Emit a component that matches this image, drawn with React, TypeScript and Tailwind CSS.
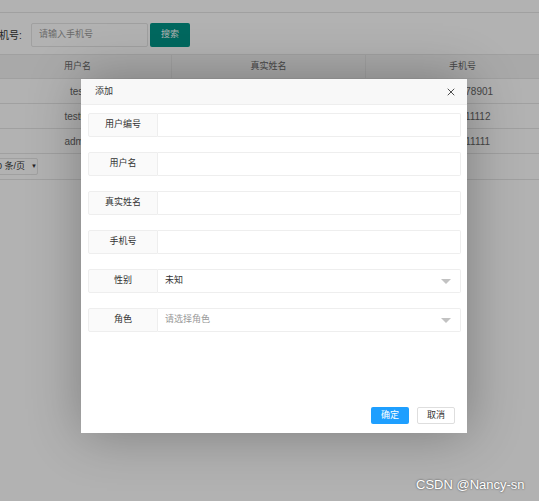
import { X } from "lucide-react";

const rows = [
  { name: "test", real: "测试", phone: "12345678901" },
  { name: "test01", real: "测试01", phone: "13111111112" },
  { name: "admin", real: "管理员", phone: "13111111111" },
];

const fields = [
  { label: "用户编号", value: "", select: false },
  { label: "用户名", value: "", select: false },
  { label: "真实姓名", value: "", select: false },
  { label: "手机号", value: "", select: false },
  { label: "性别", value: "未知", select: true },
  { label: "角色", value: "请选择角色", select: true, placeholder: true },
];

function FormRow({ label, value, select, placeholder }: { label: string; value: string; select: boolean; placeholder?: boolean }) {
  return (
    <div className="flex h-[24px]">
      <div className="w-[70px] shrink-0 flex items-center justify-center bg-[#fafafa] border border-[#eeeeee] rounded-l-[2px] text-[9px] text-[#333]">
        {label}
      </div>
      <div className="flex-1 flex items-center justify-between border border-l-0 border-[#eeeeee] rounded-r-[2px] bg-white pl-[7px] pr-[9px]">
        <span className={placeholder ? "text-[9px] text-[#999]" : "text-[9px] text-[#333]"}>{value}</span>
        {select && (
          <span className="w-0 h-0 border-l-[5px] border-r-[5px] border-t-[5px] border-l-transparent border-r-transparent border-t-[#c2c2c2]" />
        )}
      </div>
    </div>
  );
}

export default function App() {
  return (
    <div
      className="relative w-[539px] h-[501px] overflow-hidden bg-white"
      style={{ fontFamily: '"Liberation Sans", "Noto Sans CJK SC", sans-serif' }}
    >
      {/* page underneath, scrolled a little to the right */}
      <div className="h-[13px] border-b border-[#e6e6e6]" />
      <div className="flex items-center h-[24px] mt-[10px] -ml-[11px]">
        <span className="text-[10px] text-[#333] w-[42px] whitespace-nowrap">手机号:</span>
        <div className="w-[117px] h-[24px] border border-[#e6e6e6] rounded-[2px] flex items-center pl-[7px] text-[9px] text-[#999]">
          请输入手机号
        </div>
        <button className="ml-[2px] w-[40px] h-[24px] bg-[#009688] text-white text-[9px] rounded-[2px]">搜索</button>
      </div>
      <div className="mt-[7px] -ml-[16px] w-[590px] text-[10px] text-[#666]">
        <div className="flex h-[25px] bg-[#f2f2f2] border-y border-[#e6e6e6]">
          <div className="w-[188px] flex items-center justify-center border-r border-[#e6e6e6] text-[9px]">用户名</div>
          <div className="w-[194px] flex items-center justify-center border-r border-[#e6e6e6] text-[9px]">真实姓名</div>
          <div className="w-[193px] flex items-center justify-center text-[9px]">手机号</div>
        </div>
        {rows.map((r) => (
          <div key={r.phone} className="flex h-[25px] border-b border-[#e6e6e6]">
            <div className="w-[188px] flex items-center justify-center">{r.name}</div>
            <div className="w-[194px] flex items-center justify-center">{r.real}</div>
            <div className="w-[193px] flex items-center justify-center">{r.phone}</div>
          </div>
        ))}
      </div>
      <div className="h-[26px] border-b border-[#e6e6e6] flex items-center -ml-[12px]">
        <div className="h-[17px] w-[50px] border border-[#e6e6e6] rounded-[2px] flex items-center pl-[3px] gap-[6px] text-[9px] text-[#333] whitespace-nowrap">
          <span>10 条/页</span>
          <span className="text-[6px]">▼</span>
        </div>
      </div>

      {/* overlay */}
      <div className="absolute inset-0 bg-black/30" />

      {/* dialog */}
      <div className="absolute left-[81px] top-[79px] w-[386px] h-[354px] bg-white shadow-[1px_1px_50px_rgba(0,0,0,0.3)] flex flex-col">
        <div className="h-[26px] shrink-0 bg-[#f8f8f8] border-b border-[#eeeeee] flex items-center justify-between pl-[14px] pr-[10px]">
          <span className="text-[9px] text-[#333]">添加</span>
          <X size={12} strokeWidth={1.6} className="text-[#222]" />
        </div>
        <div className="flex flex-col gap-[15px] pt-[8px] pl-[7px] pr-[6px]">
          {fields.map((f) => (
            <FormRow key={f.label} {...f} />
          ))}
        </div>
        <div className="mt-auto flex justify-end gap-[8px] pr-[12px] pb-[9px]">
          <button className="w-[38px] h-[17px] bg-[#1e9fff] text-white text-[9px] rounded-[2px]">确定</button>
          <button className="w-[38px] h-[17px] bg-white border border-[#dedede] text-[#333] text-[9px] rounded-[2px]">取消</button>
        </div>
      </div>

      <div className="absolute left-[416px] top-[475px] text-[13px] text-white [text-shadow:0_0_2px_rgba(0,0,0,0.7)]">
        CSDN @Nancy-sn
      </div>
    </div>
  );
}
